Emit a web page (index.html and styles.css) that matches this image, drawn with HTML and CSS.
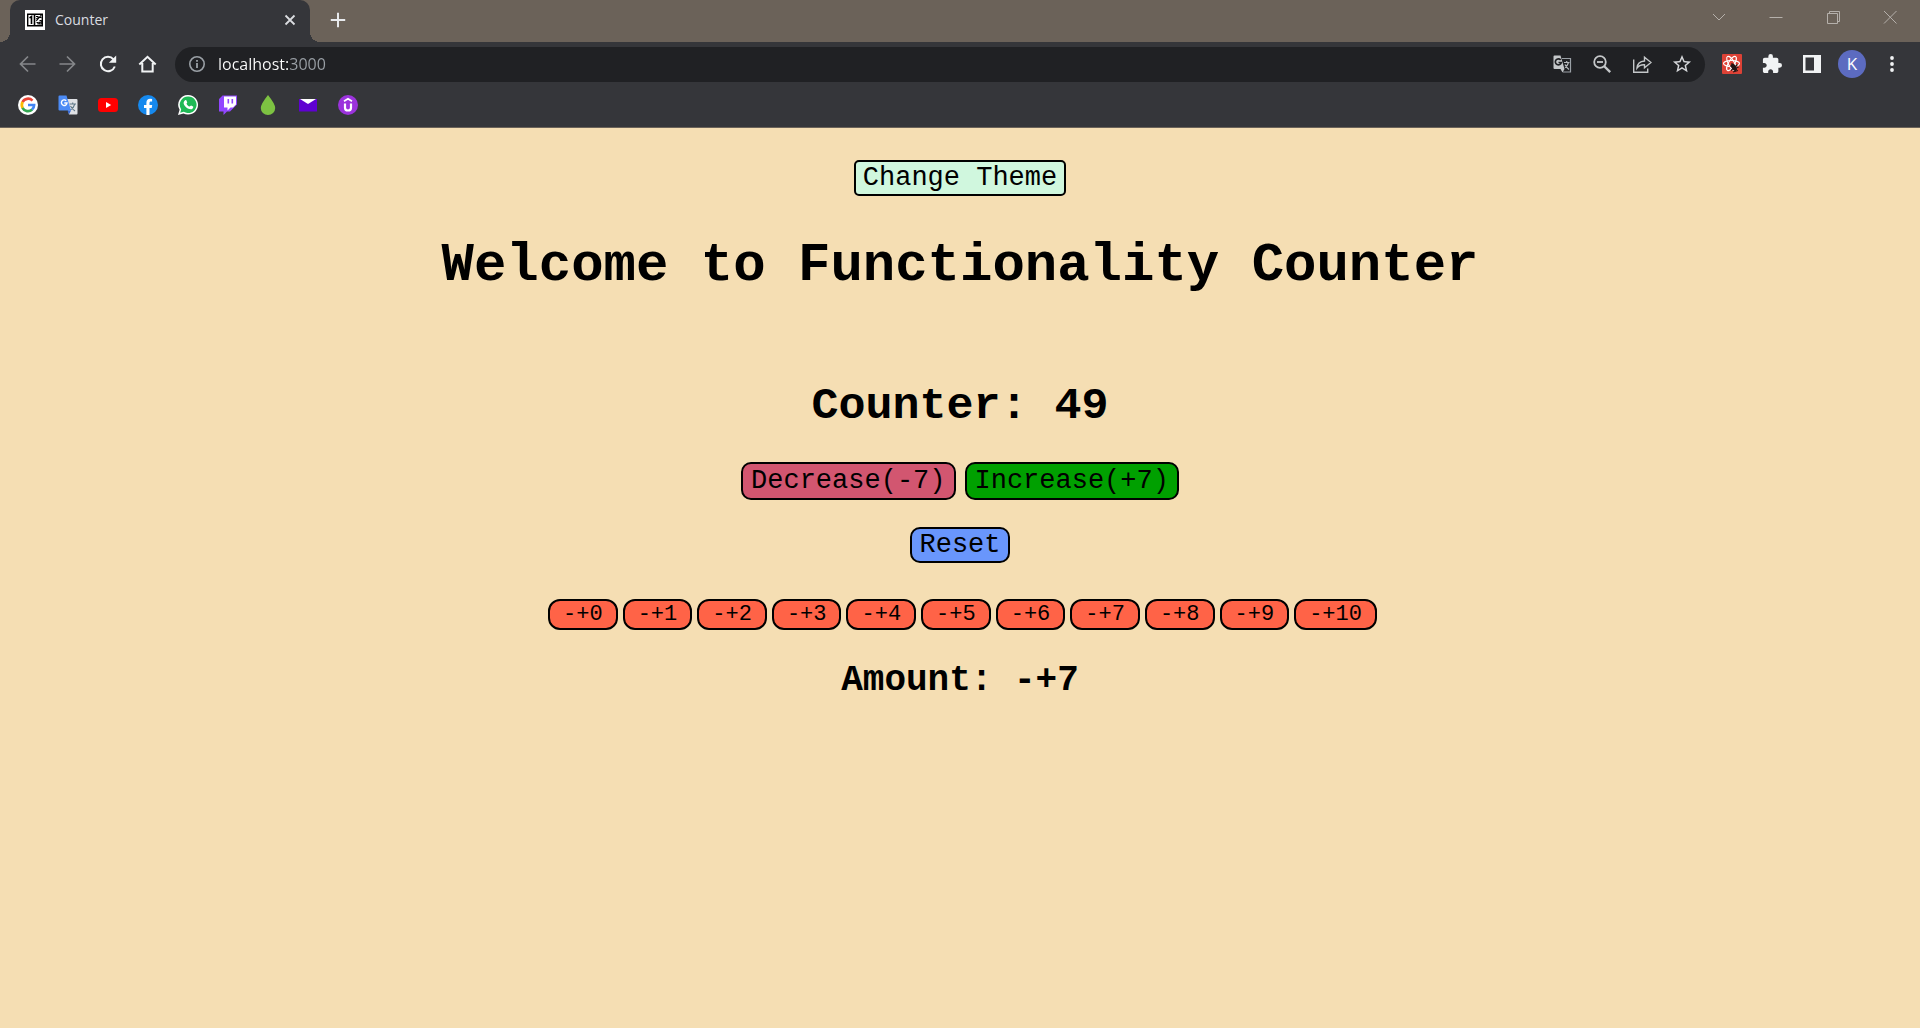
FILE: index.html
```html
<!DOCTYPE html>
<html lang="en">
<head>
<meta charset="utf-8">
<meta name="viewport" content="width=device-width, initial-scale=1">
<title>Counter</title>
<link rel="stylesheet" href="styles.css">
</head>
<body>
<header class="browser">
  <div class="tab-strip">
    <div class="tab">
      <svg class="icon" viewBox="0 0 20 20"><path fill="#fff" d="M0 0h20v20H0z"/><path fill="none" stroke="#000" stroke-width="1.400" d="M2.700 4.200h14.600v11.600H2.700z"/><path fill="none" stroke="#000" stroke-width="1.600" d="M4.500 7.800 6.500 6.500V14M9.500 4v12"/><path fill="none" stroke="#000" stroke-width="1.100" d="M11 6.500h2v2.300h-2M16.300 5l-5 6M14.500 7.500h2M11.500 12.500h1.500v2M14.500 10.500h1.800V14h-2v-1.800h2"/></svg>
      <span class="tab-title">Counter</span>
      <button class="tab-close" aria-label="Close tab"><svg class="icon" viewBox="0 0 20 20"><path fill="none" stroke="#dadce0" stroke-width="1.800" d="m5.500 5.500 9 9m0-9-9 9"/></svg></button>
    </div>
    <button class="new-tab" aria-label="New tab"><svg class="icon" viewBox="0 0 20 20"><path fill="none" stroke="#e8eaed" stroke-width="2.200" d="M10 2v16M2 10h16"/></svg></button>
    <div class="window-controls">
      <button aria-label="Search tabs"><svg class="icon" viewBox="0 0 20 20"><path fill="none" stroke="#b5b0ab" d="m4 7 6 6 6-6"/></svg></button>
      <button aria-label="Minimize"><svg class="icon" viewBox="0 0 20 20"><path fill="none" stroke="#b5b0ab" d="M3.500 10.500h13"/></svg></button>
      <button aria-label="Restore"><svg class="icon" viewBox="0 0 20 20"><path fill="none" stroke="#b5b0ab" d="M4.500 6.500h10v10h-10zM6.500 6.500v-2h10v10h-2"/></svg></button>
      <button aria-label="Close"><svg class="icon" viewBox="0 0 20 20"><path fill="none" stroke="#b5b0ab" d="m4 4 12.500 12.500M16.500 4 4 16.500"/></svg></button>
    </div>
  </div>
  <div class="toolbar">
    <button class="cell" aria-label="Back"><svg class="icon" viewBox="0 0 20 20"><path fill="none" stroke="#85878a" stroke-width="1.700" d="M17.500 10h-15m7.500-7.500L2.500 10l7.500 7.500"/></svg></button>
    <button class="cell" aria-label="Forward"><svg class="icon" viewBox="0 0 20 20"><path fill="none" stroke="#85878a" stroke-width="1.700" d="M1.500 10h15M9 2.500l7.500 7.500L9 17.500"/></svg></button>
    <button class="cell" aria-label="Reload"><svg class="icon" viewBox="0 0 20 20"><path fill="none" stroke="#f1f3f4" stroke-width="2" d="M16.800 12.500A7.200 7.200 0 1 1 15.500 5.300"/><path fill="#f1f3f4" d="M18.200 1.500v7.300h-7.300z"/></svg></button>
    <button class="cell" aria-label="Home"><svg class="icon" viewBox="0 0 20 20"><path fill="none" stroke="#f1f3f4" stroke-width="2" d="M1.300 10.500 9.500 2.800l8.200 7.700M4.300 9v8.500h10.400V9"/></svg></button>
    <div class="address">
      <svg class="icon info" viewBox="0 0 20 20"><circle cx="10" cy="10" r="7.200" fill="none" stroke="#9aa0a6" stroke-width="1.600"/><path fill="#9aa0a6" d="M9.100 9h1.800v5H9.100zM9.100 6h1.800v1.800H9.100z"/></svg>
      <input class="url" type="text" value="localhost:3000" aria-label="Address">
      <button class="cell" aria-label="Translate this page"><svg class="icon" viewBox="0 0 20 20"><path fill="none" stroke="#9aa0a6" stroke-width="1.200" d="M10 4.500h8.500v13.500H11"/><path fill="#c4c7c9" d="M2.500 1.500H8.500l4 13.500H2.500a1 1 0 0 1-1-1V2.500a1 1 0 0 1 1-1zM8.500 15h4l-2 3.500z"/><path fill="none" stroke="#202124" stroke-width="1.700" d="M8.700 6A3 3 0 1 0 9.300 8.500H6.500"/><path fill="none" stroke="#b4b7ba" stroke-width="1.200" d="M12 8.500h5.500M14.700 7v1.500M16.500 8.500q-1 3.500-3.500 5M13 10.500q1.500 3 4 5"/></svg></button>
      <button class="cell" aria-label="Zoom"><svg class="icon" viewBox="0 0 20 20"><circle cx="8" cy="8" r="5.800" fill="none" stroke="#c4c7c9" stroke-width="1.800"/><path fill="none" stroke="#c4c7c9" stroke-width="1.800" d="M5 8h6"/><path fill="none" stroke="#c4c7c9" stroke-width="2.400" d="m12 12 6.200 6.200"/></svg></button>
      <button class="cell" aria-label="Share"><svg class="icon" viewBox="0 0 20 20"><path fill="none" stroke="#c4c7c9" stroke-width="1.400" d="M1.700 5.500v12.800h14V14.500M5 14q.5-6.500 7.500-7V3.300L19 8.500l-6.500 5.200V10.800q-5-.3-7.500 3.200z"/></svg></button>
      <button class="cell" aria-label="Bookmark this tab"><svg class="icon" viewBox="1 1 22 22"><path fill="#d5d7da" d="m22 9.240-7.190-.62L12 2 9.190 8.630 2 9.240l5.460 4.730L5.820 21 12 17.270 18.180 21l-1.630-7.030L22 9.240zM12 15.400l-3.760 2.270 1-4.280-3.320-2.880 4.380-.38L12 6.100l1.710 4.040 4.380.38-3.320 2.880 1 4.280L12 15.400z"/></svg></button>
    </div>
    <button class="cell" aria-label="React Developer Tools"><svg class="icon" viewBox="0 0 20 20"><rect width="20" height="20" rx="1" fill="#dd4236"/><g fill="none" stroke="#fff" stroke-width="1.100"><ellipse cx="9.500" cy="9.500" rx="8" ry="3"/><ellipse cx="9.500" cy="9.500" rx="8" ry="3" transform="rotate(60 9.500 9.500)"/><ellipse cx="9.500" cy="9.500" rx="8" ry="3" transform="rotate(120 9.500 9.500)"/></g><ellipse cx="12" cy="13.500" rx="2.300" ry="4" fill="#241414" transform="rotate(-35 12 13.500)"/><path fill="none" stroke="#241414" stroke-width="1.100" d="m8 12 8.500 1.500M9 16.500l6.500-6M11 18l5-1.500M10 9v3"/></svg></button>
    <button class="cell" aria-label="Extensions"><svg class="icon" viewBox="1 1 22 22"><path fill="#f1f3f4" d="M20.500 11H19V7c0-1.100-.9-2-2-2h-4V3.500a2.500 2.500 0 0 0-5 0V5H4c-1.100 0-1.990.9-1.990 2v3.800H3.500c1.490 0 2.700 1.210 2.700 2.700s-1.210 2.700-2.700 2.700H2V20c0 1.100.9 2 2 2h3.800v-1.500c0-1.490 1.210-2.700 2.700-2.700s2.700 1.210 2.700 2.700V22H17c1.100 0 2-.9 2-2v-4h1.500a2.500 2.500 0 0 0 0-5z"/></svg></button>
    <button class="cell" aria-label="Side panel"><svg class="icon" viewBox="0 0 20 20"><path fill="#f1f3f4" fill-rule="evenodd" d="M1 1h18v18H1zM3.500 3.500v13h8.500v-13z"/></svg></button>
    <button class="cell" aria-label="Profile"><span class="avatar">K</span></button>
    <button class="cell" aria-label="Menu"><svg class="icon" viewBox="0 0 20 20"><g fill="#f1f3f4"><circle cx="10" cy="4" r="1.900"/><circle cx="10" cy="10" r="1.900"/><circle cx="10" cy="16" r="1.900"/></g></svg></button>
  </div>
  <nav class="bookmarks" aria-label="Bookmarks">
    <a class="cell" href="#" aria-label="Google"><svg class="icon" viewBox="0 0 20 20"><circle cx="10" cy="10" r="10" fill="#fff"/><g fill="none" stroke-width="2.700"><path stroke="#ea4335" d="M14.500 5.600A6.200 6.200 0 0 0 4.500 7.200"/><path stroke="#fbbc05" d="M4.600 7a6.200 6.200 0 0 0 0 6"/><path stroke="#34a853" d="M4.500 12.800a6.200 6.200 0 0 0 9.700 1.700"/><path stroke="#4285f4" d="M14 14.600A6.200 6.200 0 0 0 16.100 10H10"/></g></svg></a>
    <a class="cell" href="#" aria-label="Google Translate"><svg class="icon" viewBox="0 0 20 20"><path fill="#dfe1e5" d="M8 4h10.500a1 1 0 0 1 1 1v13.500a1 1 0 0 1-1 1H11z"/><path fill="none" stroke="#607988" stroke-width="1.100" d="M11.500 9H18M14.700 7.500V9M16.800 9q-1 4-4.500 6M12.500 11q2 3.500 4.500 5"/><path fill="#4c8bf5" d="M1.500.5h7L13 15.500H1.500a1 1 0 0 1-1-1v-13a1 1 0 0 1 1-1z"/><path fill="#3367d6" d="M9.500 15.500H13l-2 4z"/><path fill="none" stroke="#fff" stroke-width="1.400" d="M8.200 5.700a2.800 2.800 0 1 0 .8 2.300H6.300"/></svg></a>
    <a class="cell" href="#" aria-label="YouTube"><svg class="icon" viewBox="0 0 20 20"><rect y="3" width="20" height="14" rx="3.500" fill="#f00"/><path fill="#fff" d="m8 7 5.200 3L8 13z"/></svg></a>
    <a class="cell" href="#" aria-label="Facebook"><svg class="icon" viewBox="0 0 20 20"><circle cx="10" cy="10" r="10" fill="#1689ee"/><path fill="#fff" d="M8.400 20v-7H6v-3h2.400V7.700c0-2.600 1.500-3.900 3.700-3.900l2 .2v2.500H13c-1.200 0-1.500.7-1.500 1.500v2h2.700l-.5 3h-2.200v7z"/></svg></a>
    <a class="cell" href="#" aria-label="WhatsApp"><svg class="icon" viewBox="0 0 20 20"><path fill="#fff" d="M10.200 0a9.800 9.800 0 1 1-4.700 18.400L0 20l1.600-5.200A9.800 9.800 0 0 1 10.200 0z"/><path fill="#1fb956" d="M10.200 1.500a8.300 8.300 0 1 1-4.400 15.300L2.200 17.800l1-3.400A8.300 8.300 0 0 1 10.200 1.500z"/><path fill="#fff" d="M7.200 5.200c.5-.3 1-.2 1.200.3l.8 1.700c.1.500-.7 1.300-.7 1.500.7 1.400 1.700 2.300 3.100 2.900.4 0 1.100-1.100 1.500-1l2 1c.5.400 0 1.800-.9 2.300-1.200.7-2.700.3-4.400-.5-2-1-3.700-3-4.100-4.700-.4-1.500.6-3 1.500-3.500z"/></svg></a>
    <a class="cell" href="#" aria-label="Twitch"><svg class="icon" viewBox="0 0 20 20"><path fill="#9146ff" d="M4.500.5 1 4v12.500h4.500V20L9 16.500h3l7-7v-9z"/><path fill="#fff" d="M6 1.500h12v8l-3 3h-2.500L9.500 15.500v-3H6z"/><path fill="#9146ff" d="M9.500 4h1.600v4.500H9.500zM13.500 4h1.600v4.500h-1.600z"/></svg></a>
    <a class="cell" href="#" aria-label="Drop"><svg class="icon" viewBox="0 0 20 20"><path fill="#7dc242" d="M10 0q7.200 9 7.200 13a7.200 7 0 0 1-14.400 0Q2.800 9 10 0z"/></svg></a>
    <a class="cell" href="#" aria-label="Mail"><svg class="icon" viewBox="0 0 20 20"><path fill="#5f01d1" d="M1 4h18v12.500H1z"/><path fill="#fff" d="M2 4h16l-8 5z"/></svg></a>
    <a class="cell" href="#" aria-label="Udemy"><svg class="icon" viewBox="0 0 20 20"><circle cx="10" cy="10" r="10" fill="#9b33dc"/><path fill="none" stroke="#fff" stroke-width="2.200" d="M7 8.500v4.200a3 2.800 0 0 0 6 0V8.500"/><path fill="none" stroke="#fff" stroke-width="1.700" d="m6 6.200 4-2.400 4 2.400"/></svg></a>
  </nav>
</header>
<main class="app">
  <button class="btn theme">Change Theme</button>
  <h1 class="title">Welcome to Functionality Counter</h1>
  <h2 class="count">Counter: 49</h2>
  <div class="actions">
    <button class="btn step decrease">Decrease(-7)</button>
    <button class="btn step increase">Increase(+7)</button>
  </div>
  <button class="btn reset">Reset</button>
  <div class="amounts">
    <button class="amount">-+0</button>
    <button class="amount">-+1</button>
    <button class="amount">-+2</button>
    <button class="amount">-+3</button>
    <button class="amount">-+4</button>
    <button class="amount">-+5</button>
    <button class="amount">-+6</button>
    <button class="amount">-+7</button>
    <button class="amount">-+8</button>
    <button class="amount">-+9</button>
    <button class="amount">-+10</button>
  </div>
  <h3 class="current">Amount: -+7</h3>
</main>
</body>
</html>
```
FILE: styles.css
```css
* {
  box-sizing: border-box;
}

body {
  margin: 0;
  min-height: 100vh;
  background: #f5deb3;
  color: #000;
  font-family: "Courier New", "Liberation Mono", monospace;
}

button {
  margin: 0;
  padding: 0;
  border: 0;
  background: none;
  color: inherit;
  font: inherit;
  cursor: pointer;
}

.browser {
  background: #35363a;
  border-bottom: 1px solid #6b6359;
  font-family: "Segoe UI", "Open Sans", sans-serif;
}

.icon {
  display: block;
  flex: none;
  width: 20px;
  height: 20px;
}

.tab-strip {
  display: flex;
  height: 42px;
  padding-left: 10px;
  background: #6b6259;
}

.tab {
  position: relative;
  display: flex;
  align-items: center;
  gap: 10px;
  width: 300px;
  padding: 0 10px 2px 15px;
  border-radius: 10px 10px 0 0;
  background: #35363a;
}

.tab::before,
.tab::after {
  content: "";
  position: absolute;
  bottom: 0;
  width: 10px;
  height: 10px;
}

.tab::before {
  right: 100%;
  background: radial-gradient(circle at 0 0, transparent 10px, #35363a 10px);
}

.tab::after {
  left: 100%;
  background: radial-gradient(circle at 100% 0, transparent 10px, #35363a 10px);
}

.tab-title {
  flex: 1;
  color: #dadce0;
  font-size: 14px;
  line-height: 20px;
}

.new-tab {
  display: flex;
  align-items: center;
  margin-left: 18px;
  padding-bottom: 2px;
}

.new-tab .icon {
  padding: 1px;
}

.window-controls {
  display: flex;
  margin-left: auto;
  padding-right: 2px;
}

.window-controls button {
  display: flex;
  justify-content: center;
  width: 57px;
  padding-top: 7px;
}

.toolbar {
  display: flex;
  align-items: center;
  height: 44px;
  padding: 0 8px;
}

.cell {
  display: flex;
  flex: none;
  align-items: center;
  justify-content: center;
  width: 40px;
  height: 34px;
}

.address {
  display: flex;
  flex: 1;
  align-items: center;
  height: 35px;
  margin: 0 7px;
  padding: 0 3px 0 12px;
  border-radius: 18px;
  background: #202124;
}

.url {
  flex: 1;
  min-width: 0;
  margin-left: 11px;
  padding: 0;
  border: 0;
  outline: 0;
  background: linear-gradient(to right, #fff 70px, #9aa0a6 70px);
  background-clip: text;
  -webkit-background-clip: text;
  color: transparent;
  font-family: inherit;
  font-size: 16px;
  line-height: 24px;
}

.avatar {
  width: 28px;
  height: 28px;
  border-radius: 50%;
  background: #5c6bc0;
  color: #fff;
  font-size: 17px;
  line-height: 28px;
}

.bookmarks {
  display: flex;
  height: 41px;
  padding: 2px 8px 0;
}

.app {
  display: flex;
  flex-direction: column;
  align-items: center;
  padding: 32px 16px;
}

.btn {
  padding: 0 7px;
  border: 2px solid #000;
  border-radius: 10px;
  font-size: 27px;
  line-height: 32px;
}

.theme {
  border-radius: 5px;
  background: #d0f7de;
}

.title {
  margin: 38px 0 0;
  font-size: 54px;
  line-height: 64px;
}

.count {
  margin: 83px 0 0;
  font-size: 45px;
  line-height: 52px;
}

.actions {
  display: flex;
  gap: 9px;
  margin-top: 29px;
}

.step {
  padding: 0 8px;
  line-height: 34px;
}

.decrease {
  background: #d25670;
}

.increase {
  background: #00a000;
}

.reset {
  margin-top: 27px;
  background: #6996fc;
}

.amounts {
  display: flex;
  margin-top: 36px;
}

.amount {
  margin-left: 5px;
  padding: 0 13px;
  border: 2px solid #000;
  border-radius: 12px;
  background: #ff6347;
  font-size: 22px;
  line-height: 27px;
}

.current {
  margin: 30px 0 0;
  font-size: 36px;
  line-height: 42px;
}
```
